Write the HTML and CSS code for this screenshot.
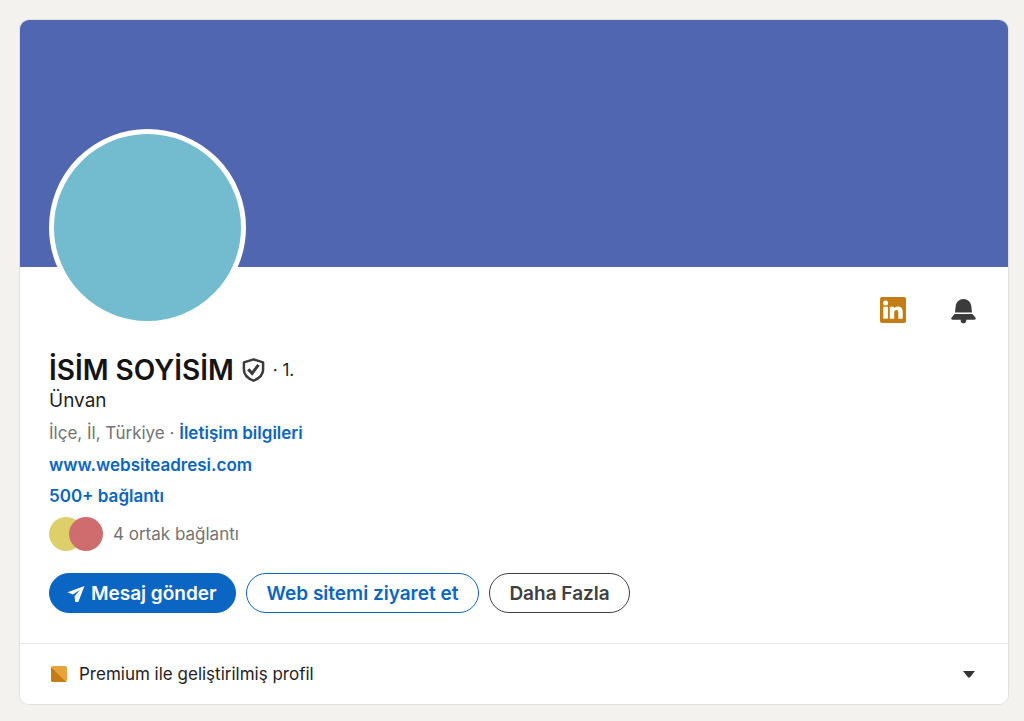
FILE: index.html
```html
<!DOCTYPE html>
<html lang="tr">
<head>
  <meta charset="UTF-8">
  <meta name="viewport" content="width=device-width, initial-scale=1.0">
  <title>İsim Soyisim</title>
  <link rel="stylesheet" href="styles.css">
</head>
<body>

  <main class="card">
    <div class="cover"></div>

    <section class="profile">
      <div class="top-row">
        <div class="avatar"></div>
        <div class="icons">
          <a href="#" class="icon-link" aria-label="LinkedIn">
            <svg width="26" height="26" viewBox="0 0 26 26">
              <rect width="26" height="26" rx="2" fill="#c37d16"/>
              <circle cx="5.600" cy="6" r="2.500" fill="#fff"/>
              <path d="M3.300 9.700h4.600v12H3.300z" fill="#fff"/>
              <path d="M9.800 9.700h4.200v1.600c.7-1.100 2-1.900 3.800-1.900 3.500 0 4.900 2.200 4.900 5.300v7h-4.400v-6.200c0-1.400-.4-2.400-1.900-2.400s-2.200 1.100-2.200 2.500v6.100H9.800z" fill="#fff"/>
            </svg>
          </a>
          <button type="button" class="icon-button" aria-label="Bildirimler">
            <svg width="26" height="26" viewBox="0 0 26 26">
              <path d="M4 14.500 4.700 8C5.200 4 8.300 1 12.500 1S19.800 4 20.300 8l.7 6.500zM3.600 15.900h17.800l3 3.600c.8 1 .3 2.200-.9 2.200h-8.200v1c0 1.400-1.200 2.600-2.800 2.600s-2.800-1.200-2.800-2.600v-1H1.500c-1.200 0-1.700-1.200-.9-2.200z" fill="#3b3b3b"/>
            </svg>
          </button>
        </div>
      </div>

      <div class="name-row">
        <h1>İSİM SOYİSİM</h1>
        <svg width="23" height="26" viewBox="0 0 24 26" fill="none" stroke="#3b3b3b">
          <path d="M12 1.900 22 5v7.500c0 5.500-3.700 9.300-10 11.600C5.700 21.800 2 18 2 12.500V5z" stroke-width="2.600" stroke-linejoin="round"/>
          <path d="M6.500 12.200l4 4.300 6.700-8.800" stroke-width="3.200"/>
        </svg>
        <span class="degree">· 1.</span>
      </div>
      <p class="headline">Ünvan</p>
      <p class="location">İlçe, İl, Türkiye · <a href="#">İletişim bilgileri</a></p>
      <p class="website"><a href="#">www.websiteadresi.com</a></p>
      <p class="connections"><a href="#">500+ bağlantı</a></p>

      <div class="mutual">
        <span class="dot yellow"></span>
        <span class="dot red"></span>
        <span class="mutual-text">4 ortak bağlantı</span>
      </div>

      <div class="buttons">
        <button type="button" class="btn primary">
          <svg width="18" height="18" viewBox="0 0 18 18">
            <path d="M17.500 1 .5 7.300 6 9.500l7-4.700-5.500 6.400.8 5.800h3z" fill="#fff"/>
          </svg>
          Mesaj gönder
        </button>
        <button type="button" class="btn outline">Web sitemi ziyaret et</button>
        <button type="button" class="btn more">Daha Fazla</button>
      </div>
    </section>

    <button type="button" class="premium">
      <svg width="16" height="16" viewBox="0 0 16 16">
        <rect width="16" height="16" rx="2" fill="#e7a33e"/>
        <path d="M0 1v13a2 2 0 0 0 2 2h13z" fill="#c37d16"/>
      </svg>
      <span>Premium ile geliştirilmiş profil</span>
      <svg class="caret" width="12" height="7" viewBox="0 0 12 7">
        <path d="M0 0h12L7 6.300q-1 .9-2 0z" fill="#333"/>
      </svg>
    </button>
  </main>

</body>
</html>
```

FILE: styles.css
```css
* {
  box-sizing: border-box;
}

body {
  margin: 0;
  padding: 19px 15px 16px 19px;
  background: #f3f2ee;
  color: #1f1f1f;
  font-family: Inter, "Liberation Sans", sans-serif;
}

h1,
p {
  margin: 0;
}

a {
  color: #0a66c2;
  font-weight: 600;
  text-decoration: none;
}

a:hover {
  text-decoration: underline;
}

button {
  font-family: inherit;
  cursor: pointer;
}

svg {
  display: block;
  flex: none;
}

.card {
  background: #fff;
  border: 1px solid #e2e1dd;
  border-radius: 10px;
  overflow: hidden;
}

.cover {
  height: 247px;
  background: #5066b1;
}

.profile {
  padding: 0 31px 30px 29px;
}

.top-row {
  display: flex;
  justify-content: space-between;
}

.avatar {
  width: 197px;
  height: 197px;
  margin-top: -138px;
  background: #73bccf;
  border: 5px solid #fff;
  border-radius: 50%;
}

.icons {
  display: flex;
  align-items: flex-start;
  gap: 45px;
  padding-top: 30px;
}

.icon-button {
  padding: 0;
  margin-top: 1px;
  background: none;
  border: none;
}

.name-row {
  display: flex;
  align-items: center;
  gap: 8px;
  margin-top: 26px;
  line-height: 36px;
}

h1 {
  color: #141414;
  font-size: 28px;
  font-weight: 600;
}

.degree {
  font-size: 17px;
}

.headline {
  font-size: 19px;
  line-height: 26px;
}

.location,
.website,
.connections {
  font-size: 17px;
  line-height: 24px;
}

.location {
  margin-top: 7px;
  color: #737373;
}

.website {
  margin-top: 8px;
}

.connections {
  margin-top: 7px;
}

.mutual {
  display: flex;
  align-items: center;
  margin-top: 9px;
}

.dot {
  width: 34px;
  height: 34px;
  border-radius: 50%;
}

.yellow {
  background: #ddd06a;
}

.red {
  margin-left: -14px;
  background: #cf6d6e;
}

.mutual-text {
  margin-left: 10px;
  color: #737373;
  font-size: 17px;
}

.buttons {
  display: flex;
  gap: 10px;
  margin-top: 22px;
}

.btn {
  display: flex;
  align-items: center;
  gap: 6px;
  height: 40px;
  padding: 1px 19px 0;
  background: #fff;
  border: 1px solid;
  border-radius: 20px;
  font-size: 19px;
  font-weight: 600;
}

.primary {
  padding-left: 17px;
  padding-right: 18px;
  background: #0a66c2;
  border-color: #0a66c2;
  color: #fff;
}

.outline {
  padding-left: 20px;
  padding-right: 20px;
  border-color: #0a66c2;
  color: #0a66c2;
}

.more {
  border-color: #404040;
  color: #404040;
}

.premium {
  display: flex;
  align-items: center;
  gap: 12px;
  width: 100%;
  padding: 19px 33px 19px 31px;
  background: #fff;
  border: none;
  border-top: 1px solid #e8e8e8;
  color: #1f1f1f;
  font-size: 17px;
  line-height: 22px;
}

.caret {
  margin-left: auto;
}
```
